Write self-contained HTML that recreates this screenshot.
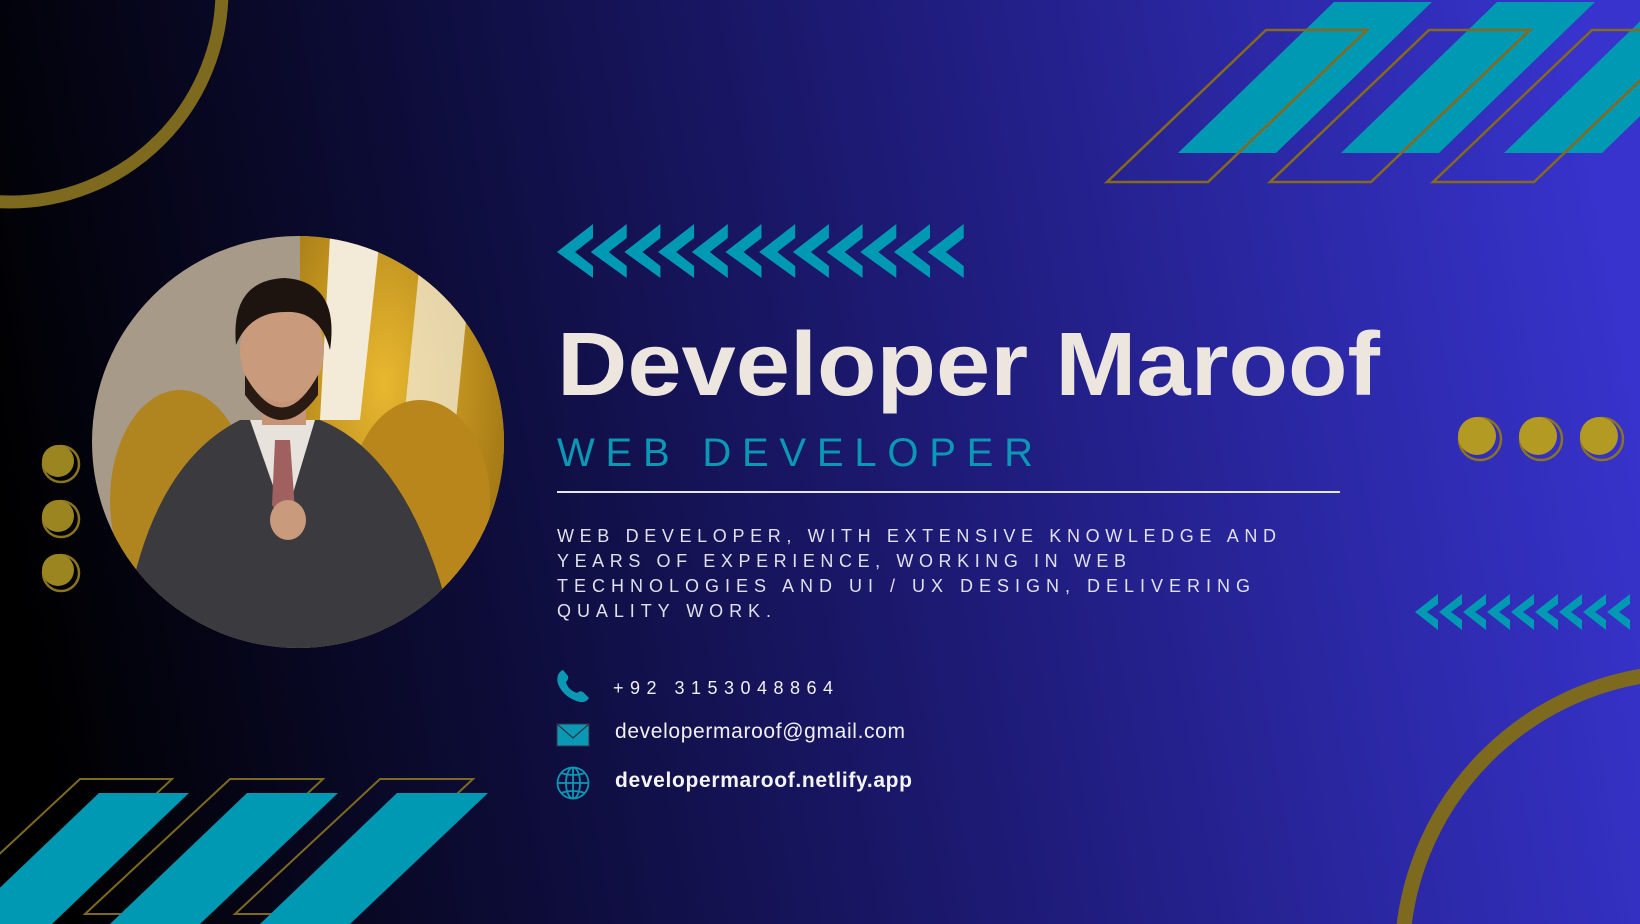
<!DOCTYPE html>
<html><head><meta charset="utf-8"><style>
html,body{margin:0;padding:0;width:1640px;height:924px;overflow:hidden;background:#000}
svg{display:block;overflow:hidden}
text{font-family:"Liberation Sans",sans-serif}
</style></head><body>
<svg width="1640" height="924" viewBox="0 0 1640 924" xmlns="http://www.w3.org/2000/svg">
<defs>
<linearGradient id="bg" x1="0" y1="0.55" x2="1" y2="0.45">
<stop offset="0" stop-color="#000000"/>
<stop offset="0.3" stop-color="#0e0d3c"/>
<stop offset="0.6" stop-color="#1f1c7c"/>
<stop offset="1" stop-color="#3733cc"/>
</linearGradient>
<clipPath id="pc"><circle cx="298" cy="442" r="206"/></clipPath>
<radialGradient id="gold" cx="0.4" cy="0.35" r="0.7"><stop offset="0" stop-color="#e8b830"/><stop offset="1" stop-color="#9a6f10"/></radialGradient>
</defs>
<rect width="1640" height="924" fill="url(#bg)"/>
<circle cx="10" cy="-10" r="212" fill="none" stroke="#7d6a1e" stroke-width="13"/>
<circle cx="1690" cy="960" r="288" fill="none" stroke="#7d6a1e" stroke-width="15"/>
<g fill="#0099b3">
<polygon points="1334,2 1432,2 1276,153 1178,153"/>
<polygon points="1497,2 1595,2 1439,153 1341,153"/>
<polygon points="1660,2 1758,2 1602,153 1504,153"/>
</g>
<g fill="none" stroke="#86691a" stroke-width="2.5">
<polygon points="1266,30 1367,30 1208,182 1107,182"/>
<polygon points="1429,30 1530,30 1371,182 1270,182"/>
<polygon points="1592,30 1693,30 1534,182 1433,182"/>
</g>
<g fill="none" stroke="#7d6a1e" stroke-width="2">
<polygon points="80,779 172,779 28,914 -65,914"/>
<polygon points="230,779 323,779 178,914 85,914"/>
<polygon points="380,779 473,779 328,914 235,914"/>
</g>
<g fill="#0099b3">
<polygon points="99,793 189,793 52,924 -38,924"/>
<polygon points="247,793 338,793 200,924 110,924"/>
<polygon points="397,793 488,793 350,924 260,924"/>
</g>
<g fill="#0099b3">
<polygon id="cv" points="557,252 593,224 593,238 575,252 593,266 593,278"/>
<use href="#cv" x="33.7"/><use href="#cv" x="67.4"/><use href="#cv" x="101.1"/><use href="#cv" x="134.8"/><use href="#cv" x="168.5"/><use href="#cv" x="202.2"/><use href="#cv" x="235.9"/><use href="#cv" x="269.6"/><use href="#cv" x="303.3"/><use href="#cv" x="337"/><use href="#cv" x="370.7"/>
</g>
<g fill="#0099b3">
<polygon id="cr" points="1415,612 1438,594 1438,604 1427,612 1438,620 1438,630"/>
<use href="#cr" x="24"/><use href="#cr" x="48"/><use href="#cr" x="72"/><use href="#cr" x="96"/><use href="#cr" x="120"/><use href="#cr" x="144"/><use href="#cr" x="168"/><use href="#cr" x="192"/>
</g>
<g>
<circle cx="1480" cy="439" r="21" fill="none" stroke="#8a7420" stroke-width="2.5"/>
<circle cx="1477" cy="436" r="19" fill="#b39a22"/>
<circle cx="1541" cy="439" r="21" fill="none" stroke="#8a7420" stroke-width="2.5"/>
<circle cx="1538" cy="436" r="19" fill="#b39a22"/>
<circle cx="1602" cy="439" r="21" fill="none" stroke="#8a7420" stroke-width="2.5"/>
<circle cx="1599" cy="436" r="19" fill="#b39a22"/>
<circle cx="61" cy="464" r="18" fill="none" stroke="#8a7420" stroke-width="2.5"/>
<circle cx="58" cy="461" r="16" fill="#9a8520"/>
<circle cx="61" cy="519" r="18" fill="none" stroke="#8a7420" stroke-width="2.5"/>
<circle cx="58" cy="516" r="16" fill="#9a8520"/>
<circle cx="61" cy="573" r="18" fill="none" stroke="#8a7420" stroke-width="2.5"/>
<circle cx="58" cy="570" r="16" fill="#9a8520"/>
</g>
<g clip-path="url(#pc)">
<rect x="90" y="236" width="420" height="420" fill="#a89a88"/>
<rect x="300" y="236" width="210" height="420" fill="url(#gold)"/>
<polygon points="330,236 380,236 360,420 320,420" fill="#f3ead8"/>
<polygon points="420,260 470,280 450,480 400,460" fill="#f0e6cc" opacity="0.8"/>
<ellipse cx="180" cy="500" rx="70" ry="110" fill="#b08520"/>
<ellipse cx="420" cy="500" rx="70" ry="100" fill="#b8861a"/>
<path d="M120,660 Q140,470 240,420 L320,420 Q420,460 460,660 Z" fill="#3a3a3f"/>
<path d="M250,420 L285,520 L315,420 Z" fill="#e8e2dc"/>
<path d="M275,440 L290,440 L295,510 L282,520 L272,505 Z" fill="#a06060"/>
<rect x="262" y="370" width="44" height="55" fill="#c89478"/>
<ellipse cx="282" cy="350" rx="42" ry="52" fill="#c99a7c"/>
<path d="M245,375 Q282,440 318,375 L318,395 Q282,445 245,395 Z" fill="#2a1a14"/>
<path d="M236,345 Q230,280 285,278 Q340,282 330,350 Q320,310 285,312 Q250,312 236,345 Z" fill="#1d1410"/>
<ellipse cx="288" cy="520" rx="18" ry="20" fill="#c99a7c"/>
</g>
<text x="557" y="395" font-size="90" font-weight="bold" fill="#ece6df" textLength="823" lengthAdjust="spacingAndGlyphs">Developer Maroof</text>
<text x="557" y="466" font-size="40" fill="#0b98b5" textLength="476" lengthAdjust="spacing">WEB DEVELOPER</text>
<rect x="557" y="491" width="783" height="2" fill="#e6e6ee"/>
<g font-size="18" fill="#e0e0ea">
<text x="557" y="542" textLength="719" lengthAdjust="spacing">WEB DEVELOPER, WITH EXTENSIVE KNOWLEDGE AND</text>
<text x="557" y="567" textLength="569" lengthAdjust="spacing">YEARS OF EXPERIENCE, WORKING IN WEB</text>
<text x="557" y="592" textLength="693" lengthAdjust="spacing">TECHNOLOGIES AND UI / UX DESIGN, DELIVERING</text>
<text x="557" y="617" textLength="214" lengthAdjust="spacing">QUALITY WORK.</text>
</g>
<path d="M560,672 Q556,676 558,684 Q564,698 580,702 Q586,703 589,698 L583,692 Q580,690 577,693 Q568,690 566,682 Q569,679 568,676 L563,670 Q562,670 560,672 Z" fill="#0b98b5"/>
<text x="613" y="694" font-family="Liberation Mono,monospace" font-size="18" fill="#f0f0f0" textLength="220" lengthAdjust="spacing">+92 3153048864</text>
<rect x="557" y="724" width="32" height="22" fill="#0b98b5" stroke="#334" stroke-width="1"/>
<path d="M557,724 L573,738 L589,724" fill="none" stroke="#334" stroke-width="1.2"/>
<text x="615" y="738" font-size="21" fill="#f0f0f0" textLength="290" lengthAdjust="spacing">developermaroof@gmail.com</text>
<g fill="none" stroke="#0b98b5" stroke-width="1.8">
<circle cx="573" cy="783" r="15.5"/>
<ellipse cx="573" cy="783" rx="7" ry="15.5"/>
<line x1="573" y1="767" x2="573" y2="799"/>
<line x1="558" y1="783" x2="588" y2="783"/>
<path d="M561,773 Q573,777 585,773 M561,793 Q573,789 585,793"/>
</g>
<text x="615" y="787" font-size="21" font-weight="bold" fill="#f4f4f4" textLength="297" lengthAdjust="spacing">developermaroof.netlify.app</text>
</svg>
</body></html>
